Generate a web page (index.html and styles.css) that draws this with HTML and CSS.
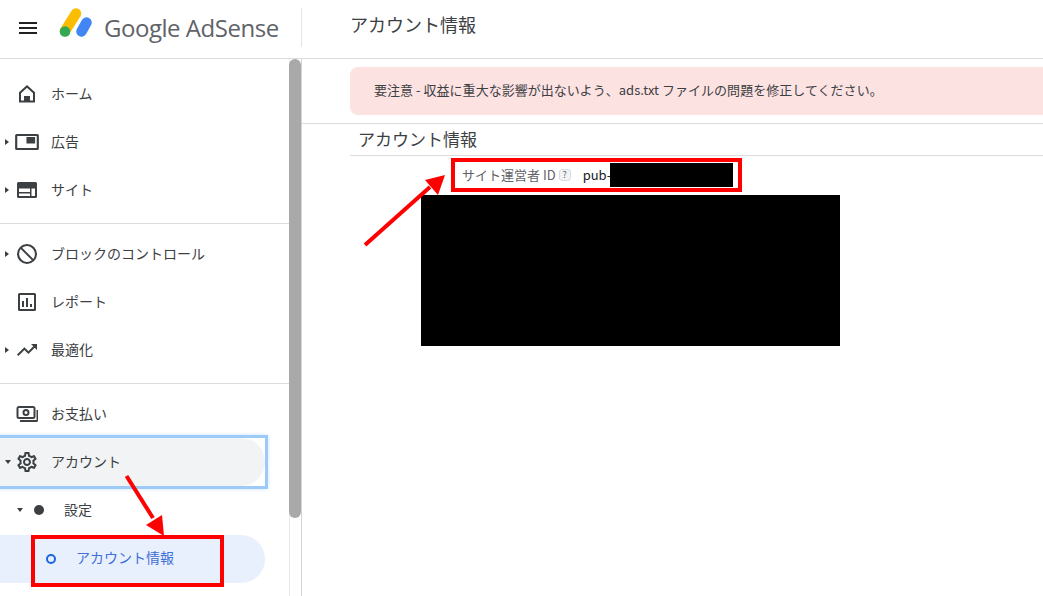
FILE: index.html
```html
<!DOCTYPE html>
<html lang="ja">
<head>
<meta charset="utf-8">
<title>アカウント情報</title>
<link rel="stylesheet" href="styles.css">
</head>
<body>
<div class="app">
  <header class="topbar">
    <div class="brand">
      <svg class="menu-icon" viewBox="0 0 18 12"><path d="M0 0h18v2H0zM0 5h18v2H0zM0 10h18v2H0z"/></svg>
      <svg class="logo" viewBox="0 0 34 30">
        <path d="M6 23 17 5.500" class="logo-y"/>
        <path d="M27.500 14.500 22.500 23.500" class="logo-b"/>
        <circle cx="6" cy="23.500" r="5.300" fill="#34a853"/>
      </svg>
      <span class="wordmark">Google AdSense</span>
    </div>
    <h1 class="page-title">アカウント情報</h1>
  </header>
  <div class="content">
    <aside class="sidebar">
      <nav class="nav">
        <div class="nav-group">
          <a class="nav-item"><span class="caret"></span>
            <svg class="icon" viewBox="0 0 24 24"><path d="M12 3 4 10.200V20.500h16V10.200zM6 11.200l6-5.400 6 5.400V18.500h-3V14H9v4.500H6z"/></svg>
            <span class="label">ホーム</span></a>
          <a class="nav-item"><span class="caret caret-right"></span>
            <svg class="icon icon-wide" viewBox="0 0 24 24"><path d="M2.500 4A1.500 1.500 0 0 0 1 5.500v13A1.500 1.500 0 0 0 2.500 20h19a1.500 1.500 0 0 0 1.500-1.500v-13A1.500 1.500 0 0 0 21.500 4zM3 6h18v12H3zM11.500 7h8v6.500h-8z"/></svg>
            <span class="label">広告</span></a>
          <a class="nav-item"><span class="caret caret-right"></span>
            <svg class="icon" viewBox="0 0 24 24"><path d="M3.500 4A1.500 1.500 0 0 0 2 5.500v13A1.500 1.500 0 0 0 3.500 20h17a1.500 1.500 0 0 0 1.500-1.500v-13A1.500 1.500 0 0 0 20.500 4zM4 10.500h11V14H4zM4 15.500h11V18H4zM16.500 10.500H20V18h-3.500z"/></svg>
            <span class="label">サイト</span></a>
        </div>
        <div class="nav-group">
          <a class="nav-item"><span class="caret caret-right"></span>
            <svg class="icon" viewBox="0 0 24 24"><path d="M12 2a10 10 0 1 0 0 20 10 10 0 0 0 0-20zM7.100 5.700A8 8 0 0 1 18.300 16.900zM5.700 7.100 16.900 18.300A8 8 0 0 1 5.700 7.100z"/></svg>
            <span class="label">ブロックのコントロール</span></a>
          <a class="nav-item"><span class="caret"></span>
            <svg class="icon" viewBox="0 0 24 24"><path d="M4.500 3A1.500 1.500 0 0 0 3 4.500v15A1.500 1.500 0 0 0 4.500 21h15a1.500 1.500 0 0 0 1.500-1.500v-15A1.500 1.500 0 0 0 19.500 3zM5 5h14v14H5zM7 11h2v6H7zM11 8h2v9h-2zM15 14h2v3h-2z"/></svg>
            <span class="label">レポート</span></a>
          <a class="nav-item"><span class="caret caret-right"></span>
            <svg class="icon" viewBox="0 0 24 24"><path d="m16 6 2.300 2.300-4.900 4.900-4-4L2 16.600 3.400 18l6-6 4 4 6.300-6.300L22 12V6z"/></svg>
            <span class="label">最適化</span></a>
        </div>
        <div class="nav-group nav-group-last">
          <a class="nav-item"><span class="caret"></span>
            <svg class="icon" viewBox="0 0 24 24"><path d="M4 4A2.500 2.500 0 0 0 1.500 6.500v8A2.500 2.500 0 0 0 4 17h14a2.500 2.500 0 0 0 2.500-2.500v-8A2.500 2.500 0 0 0 18 4zM3.500 6h15v9h-15zM11 7a3.500 3.500 0 1 0 0 7 3.500 3.500 0 0 0 0-7zM11 9a1.500 1.500 0 1 1 0 3 1.500 1.500 0 0 1 0-3zM21.500 8v10H5v2h16.500a1.500 1.500 0 0 0 1.500-1.500V8z"/></svg>
            <span class="label">お支払い</span></a>
          <div class="focus-wrap">
            <a class="nav-item nav-item-focus"><span class="caret caret-down"></span>
              <svg class="icon" viewBox="0 0 24 24"><path d="M19.43 12.98c.04-.32.07-.64.07-.98 0-.34-.03-.66-.07-.98l2.11-1.65c.19-.15.24-.42.12-.64l-2-3.46c-.09-.16-.26-.25-.44-.25-.06 0-.12.01-.17.03l-2.49 1c-.52-.4-1.08-.73-1.69-.98l-.38-2.65C14.460 2.180 14.250 2 14 2h-4c-.25 0-.46.18-.49.42l-.38 2.65c-.61.25-1.170.59-1.690.98l-2.490-1c-.06-.02-.12-.03-.18-.03-.17 0-.34.09-.43.25l-2 3.460c-.13.22-.07.49.12.64l2.110 1.650c-.04.32-.07.65-.07.98 0 .33.03.66.07.98l-2.110 1.650c-.19.15-.24.42-.12.64l2 3.460c.09.16.26.25.44.25.06 0 .12-.01.17-.03l2.490-1c.52.4 1.080.73 1.690.98l.38 2.650c.03.24.24.42.49.42h4c.25 0 .46-.18.49-.42l.38-2.650c.61-.25 1.170-.59 1.690-.98l2.490 1c.06.02.12.03.18.03.17 0 .34-.09.43-.25l2-3.460c.12-.22.07-.49-.12-.64l-2.110-1.650zm-1.980-1.710c.04.31.05.52.05.73 0 .21-.02.43-.05.73l-.14 1.130.89.7 1.080.84-.7 1.210-1.270-.51-1.040-.42-.9.68c-.43.32-.84.56-1.250.73l-1.060.43-.16 1.130-.2 1.350h-1.400l-.19-1.350-.16-1.130-1.060-.43c-.43-.18-.83-.41-1.230-.71l-.91-.7-1.060.43-1.270.51-.7-1.210 1.080-.84.89-.7-.14-1.130c-.03-.31-.05-.54-.05-.74s.02-.43.05-.73l.14-1.130-.89-.7-1.080-.84.7-1.210 1.270.51 1.040.42.9-.68c.43-.32.84-.56 1.250-.73l1.060-.43.16-1.130.2-1.350h1.390l.19 1.350.16 1.130 1.060.43c.43.18.83.41 1.230.71l.91.7 1.060-.43 1.270-.51.7 1.210-1.070.85-.89.7.14 1.130zM12 8c-2.210 0-4 1.790-4 4s1.790 4 4 4 4-1.790 4-4-1.790-4-4-4zm0 6c-1.100 0-2-.9-2-2s.9-2 2-2 2 .9 2 2-.9 2-2 2z"/></svg>
              <span class="label">アカウント</span></a>
          </div>
          <a class="nav-item nav-sub"><span class="caret caret-down"></span>
            <span class="dot"></span>
            <span class="label">設定</span></a>
          <a class="nav-item nav-selected">
            <span class="ring"></span>
            <span class="label label-selected">アカウント情報</span></a>
        </div>
      </nav>
      <div class="scrollbar"><div class="thumb"></div></div>
    </aside>
    <main class="main">
      <div class="alert">要注意 - 収益に重大な影響が出ないよう、ads.txt ファイルの問題を修正してください。</div>
      <section class="account">
        <h2 class="section-title">アカウント情報</h2>
        <div class="pub-row">
          <span class="pub-label">サイト運営者 ID</span>
          <span class="help">?</span>
          <span class="pub-value">pub-</span>
          <span class="redact-inline"></span>
        </div>
        <div class="redact-block"></div>
      </section>
    </main>
  </div>
  <div class="nav-box"></div>
  <svg class="annotations" viewBox="0 0 1043 596">
    <path d="M126.500 476 153 518" class="arrow-line"/>
    <path d="M164 536 146 525 162 515z" class="arrow-head"/>
    <path d="M365 245 430 187" class="arrow-line"/>
    <path d="M445 175 425 180 438 195z" class="arrow-head"/>
  </svg>
</div>
</body>
</html>
```
FILE: styles.css
```css
* { box-sizing: border-box; }
html, body { margin: 0; height: 100%; }
body {
  background: #fff;
  color: #3c4043;
  font-family: "Noto Sans CJK JP", "Noto Sans", sans-serif;
  overflow: hidden;
}
.app { position: relative; width: 1043px; height: 596px; display: flex; flex-direction: column; overflow: hidden; }

.topbar { height: 59px; flex: none; display: flex; border-bottom: 1px solid #dadce0; }
.brand { width: 302px; height: 39px; margin-top: 8px; display: flex; align-items: center; padding-left: 19px; border-right: 1px solid #e3e4e6; flex: none; }
.menu-icon { width: 18px; height: 12px; fill: #202124; flex: none; margin-top: 1px; }
.logo { width: 34px; height: 30px; margin-left: 22px; margin-top: -9px; flex: none; }
.logo-y, .logo-b { fill: none; stroke-width: 10.500; stroke-linecap: round; }
.logo-y { stroke: #fbbc04; }
.logo-b { stroke: #4285f4; }
.wordmark { margin-left: 11px; margin-top: -1px; font-family: "Open Sans", Roboto, sans-serif; font-size: 24px; color: #5f6368; letter-spacing: -0.47px; white-space: nowrap; }
.page-title { margin: 0 0 0 48px; font-size: 18px; font-weight: 400; line-height: 48px; color: #3c4043; white-space: nowrap; }

.content { flex: 1; display: flex; min-height: 0; }
.sidebar { width: 302px; flex: none; display: flex; border-right: 1px solid #d2d3d5; }
.nav { width: 289px; flex: none; padding-top: 11px; overflow: hidden; }
.nav-group { padding-bottom: 9px; margin-bottom: 6px; border-bottom: 1px solid #dadce0; }
.nav-group-last { border-bottom: 0; }
.nav-item { display: flex; align-items: center; height: 48px; width: 265px; font-size: 14px; color: #3c4043; white-space: nowrap; }
.label { margin-top: -2px; }
.caret { width: 15px; flex: none; display: flex; justify-content: center; padding-right: 1px; }
.caret-right::before { content: ""; border-left: 4px solid #3c4043; border-top: 3.500px solid transparent; border-bottom: 3.500px solid transparent; margin-left: -1px; }
.caret-down::before { content: ""; border-top: 4px solid #3c4043; border-left: 3.500px solid transparent; border-right: 3.500px solid transparent; margin-left: 1px; }
.icon { width: 24px; height: 24px; fill: #3c4043; fill-rule: evenodd; flex: none; margin-right: 12px; }
.icon-wide { transform: scaleX(1.08); }
.focus-wrap { width: 265px; height: 48px; outline: 3px solid #9ccbfa; box-shadow: 0 0 4px 3px #cfe5fc; }
.nav-item-focus { background: #f1f3f4; border-radius: 0 24px 24px 0; }
.nav-sub .caret { margin-left: 12px; }
.dot { width: 10px; height: 10px; border-radius: 50%; background: #3c4043; margin-left: 7px; margin-right: 20px; flex: none; }
.nav-selected { background: #e8f0fe; border-radius: 0 24px 24px 0; color: #3f6fd8; padding-left: 46px; margin-top: 1px; }
.label-selected { margin-top: -4px; }
.ring { width: 10px; height: 10px; border: 2px solid #1a66e0; border-radius: 50%; margin-right: 20px; flex: none; }
.scrollbar { width: 12px; flex: none; border-left: 1px solid #e8e8e8; }
.thumb { width: 12px; height: 459px; margin-left: -1px; background: #a9a9a9; border-radius: 6px; }

.main { flex: 1; min-width: 0; padding-top: 8px; }
.alert { margin-left: 48px; height: 48px; line-height: 46px; padding-left: 24px; background: #fde2e2; border-radius: 8px 0 0 8px; font-size: 13px; letter-spacing: 0.03px; color: #3c4043; white-space: nowrap; }
.account { margin-top: 8px; border-top: 1px solid #dadce0; }
.section-title { margin: 0 0 0 48px; height: 32px; padding-left: 8px; font-size: 17px; line-height: 29px; font-weight: 400; color: #3c4043; border-bottom: 1px solid #dadce0; white-space: nowrap; }
.pub-row { display: flex; align-items: center; width: 291px; height: 34px; margin: 2px 0 0 149px; padding-left: 7px; border: 4px solid #f00; font-size: 13px; line-height: 20px; }
.pub-label { color: #5f6368; }
.help { width: 12px; height: 12px; margin-left: 3px; border: 1px solid #dadce0; background: #f1f3f4; border-radius: 3px; font-size: 9px; line-height: 10px; text-align: center; color: #5f6368; flex: none; }
.pub-value { margin-left: 12px; color: #202124; }
.redact-inline { width: 123px; height: 24px; background: #000; margin-left: -1px; flex: none; }
.redact-block { width: 419px; height: 151px; background: #000; margin: 3px 0 0 119px; }

.nav-box { position: absolute; left: 31px; top: 535px; width: 193px; height: 52px; border: 4px solid #f00; }
.annotations { position: absolute; left: 0; top: 0; width: 1043px; height: 596px; pointer-events: none; }
.arrow-line { fill: none; stroke: #f00; stroke-width: 4; }
.arrow-head { fill: #f00; }
```
